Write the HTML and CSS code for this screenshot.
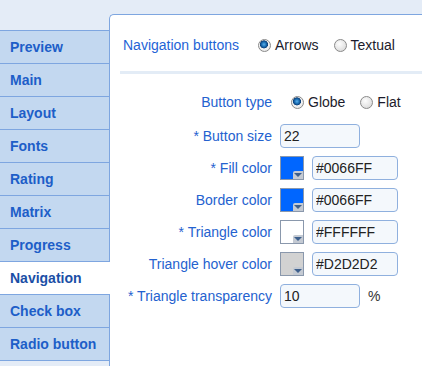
FILE: index.html
```html
<!DOCTYPE html>
<html lang="en">
<head>
    <meta charset="UTF-8">
    <title>Navigation settings</title>
    <link rel="stylesheet" href="styles.css">
</head>
<body>
    <div class="layout">
        <ul class="tabs">
            <li class="tab">Preview</li>
            <li class="tab">Main</li>
            <li class="tab">Layout</li>
            <li class="tab">Fonts</li>
            <li class="tab">Rating</li>
            <li class="tab">Matrix</li>
            <li class="tab">Progress</li>
            <li class="tab active">Navigation</li>
            <li class="tab">Check box</li>
            <li class="tab last">Radio button</li>
        </ul>

        <div class="panel">
            <div class="head-row">
                <span class="head-label">Navigation buttons</span>
                <label class="radio"><span class="dot checked"></span>Arrows</label>
                <label class="radio"><span class="dot"></span>Textual</label>
            </div>
            <div class="separator"></div>

            <div class="form">
                <div class="row first">
                    <span class="label">Button type</span>
                    <div class="controls radios">
                        <label class="radio"><span class="dot checked"></span>Globe</label>
                        <label class="radio"><span class="dot"></span>Flat</label>
                    </div>
                </div>
                <div class="row">
                    <span class="label">* Button size</span>
                    <div class="controls"><input class="field short" type="text" value="22"></div>
                </div>
                <div class="row">
                    <span class="label">* Fill color</span>
                    <div class="controls">
                        <span class="swatch blue"></span>
                        <input class="field hex" type="text" value="#0066FF">
                    </div>
                </div>
                <div class="row">
                    <span class="label">Border color</span>
                    <div class="controls">
                        <span class="swatch blue"></span>
                        <input class="field hex" type="text" value="#0066FF">
                    </div>
                </div>
                <div class="row">
                    <span class="label">* Triangle color</span>
                    <div class="controls">
                        <span class="swatch white"></span>
                        <input class="field hex" type="text" value="#FFFFFF">
                    </div>
                </div>
                <div class="row">
                    <span class="label">Triangle hover color</span>
                    <div class="controls">
                        <span class="swatch grey"></span>
                        <input class="field hex" type="text" value="#D2D2D2">
                    </div>
                </div>
                <div class="row">
                    <span class="label">* Triangle transparency</span>
                    <div class="controls">
                        <input class="field short" type="text" value="10">
                        <span class="unit">%</span>
                    </div>
                </div>
            </div>
        </div>
    </div>
</body>
</html>
```

FILE: styles.css
```css
/* page */
body {
    margin: 0;
    height: 100vh;
    overflow: hidden;
    background: #e4ecf7;
    font-family: 'Liberation Sans', Arial, sans-serif;
}

.layout {
    display: flex;
    height: 100%;
    padding-top: 14px;
    box-sizing: border-box;
}

/* tabs on the left */
.tabs {
    list-style: none;
    margin: 16px 0 0 0;
    padding: 0;
    width: 109px;
    flex-shrink: 0;
}

.tab {
    height: 32px;
    line-height: 32px;
    padding-left: 10px;
    background: #c3d8f0;
    border-top: 1px solid #7ea6e0;
    color: #1d5ec8;
    font-size: 14px;
    font-weight: bold;
}

.tab.last {
    border-bottom: 1px solid #7ea6e0;
}

.tab.active {
    position: relative;
    margin-right: -1px;
    background: #fff;
    color: #1b4fa6;
}

/* panel */
.panel {
    flex: 1;
    background: #fff;
    border-top: 1px solid #7ea6e0;
    border-left: 1px solid #7ea6e0;
    border-top-left-radius: 5px;
    padding: 19px 0 0 10px;
}

.head-row {
    display: flex;
    align-items: center;
    height: 22px;
    padding-left: 3px;
}

.head-label {
    font-size: 14px;
    color: #1e63d6;
    margin-right: 19px;
}

.separator {
    height: 3px;
    background: #e3ecf6;
    margin-top: 15px;
}

/* radio buttons */
.radio {
    display: flex;
    align-items: center;
    font-size: 14px;
    color: #1c1c2c;
    margin-right: 15px;
}

.dot {
    width: 11px;
    height: 11px;
    border: 1px solid #8a8a8a;
    border-radius: 50%;
    margin-right: 4px;
    background: radial-gradient(circle at 40% 35%, #fdfdfd 0%, #e4e4e4 60%, #cfcfcf 100%);
}

.dot.checked {
    background: radial-gradient(circle at 45% 40%, #5ab0ec 0%, #1b6fb5 25%, #0c3f78 42%, #f4f4f4 48%, #dcdcdc 100%);
}

/* form */
.form {
    margin-top: 16px;
}

.row {
    display: flex;
    align-items: center;
    height: 24px;
    margin-bottom: 8px;
}

.row.first {
    margin-bottom: 10px;
}

.label {
    width: 152px;
    text-align: right;
    font-size: 14px;
    color: #2462cf;
    margin-right: 8px;
    white-space: nowrap;
}

.controls {
    display: flex;
    align-items: center;
}

.radios {
    padding-left: 11px;
}

.field {
    height: 24px;
    box-sizing: border-box;
    border: 1px solid #8fb0de;
    border-radius: 4px;
    background: #f4f8fc;
    font-family: 'Liberation Sans', Arial, sans-serif;
    font-size: 14px;
    color: #222;
    padding: 0 3px;
    outline: none;
}

.field.short {
    width: 80px;
}

.field.hex {
    width: 86px;
}

.unit {
    margin-left: 8px;
    font-size: 14px;
    color: #333;
}

/* colour swatches */
.swatch {
    position: relative;
    width: 24px;
    height: 24px;
    box-sizing: border-box;
    border: 1px solid #8a98ac;
    margin-right: 8px;
}

.swatch.blue { background: #0066ff; }
.swatch.white { background: #fff; }
.swatch.grey { background: #d2d2d2; }

.swatch::after {
    content: "";
    position: absolute;
    right: 0;
    bottom: 0;
    width: 10px;
    height: 8px;
    background: #c4cad3;
    border-top-left-radius: 2px;
}

.swatch::before {
    content: "";
    position: absolute;
    right: 1px;
    bottom: 2px;
    z-index: 1;
    border-left: 4px solid transparent;
    border-right: 4px solid transparent;
    border-top: 4px solid #3d5f8c;
}
```
